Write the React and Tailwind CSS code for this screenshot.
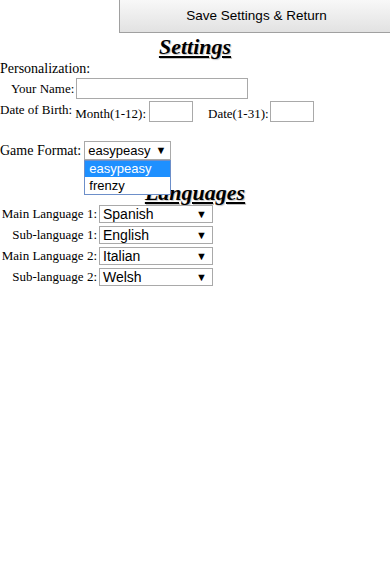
import React from "react";

const LANGS = [
  { label: "Main Language 1:", value: "Spanish" },
  { label: "Sub-language 1:", value: "English" },
  { label: "Main Language 2:", value: "Italian" },
  { label: "Sub-language 2:", value: "Welsh" },
];

const TextBox = ({ className = "" }) => (
  <input
    type="text"
    className={`h-[21px] border border-[#a9a9a9] bg-white outline-none ${className}`}
  />
);

const FakeSelect = ({ value, className = "" }) => (
  <div
    className={`flex items-center justify-between border border-[#a9a9a9] bg-white pl-[3px] pr-[4px] font-['Liberation_Sans',sans-serif] text-[13px] leading-none ${className}`}
  >
    <span>{value}</span>
    <span className="text-[11px]">▼</span>
  </div>
);

export default function App() {
  return (
    <div className="relative h-[563px] w-[390px] overflow-hidden bg-white font-['Liberation_Serif',serif] text-[14px] leading-[16px] text-black">
      <button
        type="button"
        className="ml-[119px] flex h-[33px] w-[275px] items-center justify-center border border-t-0 border-[#a0a0a0] bg-gradient-to-b from-[#f8f8f8] to-[#e2e2e2] font-['Liberation_Sans',sans-serif] text-[13.5px]"
      >
        Save Settings &amp; Return
      </button>

      <h2 className="mt-[1px] text-center text-[22px] font-bold italic leading-[26px] underline [text-shadow:1px_1px_1px_#c4c4c4]">
        Settings
      </h2>

      <div className="mt-[1px]">Personalization:</div>

      <div className="mt-[1px] flex items-center pl-[11px] text-[13px]">
        <span>Your Name:</span>
        <TextBox className="ml-[2px] w-[172px]" />
      </div>

      <div className="mt-[2px] flex items-start text-[13px]">
        <span className="pt-[1px]">Date of Birth:</span>
        <span className="ml-[3px] pt-[5px]">Month(1-12):</span>
        <TextBox className="ml-[3px] h-[20px] w-[44px]" />
        <span className="ml-[15px] pt-[5px]">Date(1-31):</span>
        <TextBox className="ml-[1px] h-[20px] w-[44px]" />
      </div>

      <div className="relative mt-[19px] flex items-center">
        <span>Game Format:</span>
        <div className="relative ml-[3px]">
          <FakeSelect
            value="easypeasy"
            className="h-[19px] w-[87px] border-[#7aa7e6]"
          />
          <div className="absolute left-0 top-[19px] z-10 w-[87px] border border-[#6d8fc9] bg-white font-['Liberation_Sans',sans-serif] text-[13px]">
            <div className="h-[16px] bg-[#1e90ff] pl-[4px] leading-[16px] text-white">
              easypeasy
            </div>
            <div className="h-[17px] pl-[4px] leading-[17px]">frenzy</div>
          </div>
        </div>
      </div>

      <h2 className="mt-[20px] text-center text-[22px] font-bold italic leading-[26px] underline [text-shadow:1px_1px_1px_#c4c4c4]">
        Languages
      </h2>

      <div className="mt-[-1px] flex flex-col gap-[3px] text-[13px]">
        {LANGS.map((row) => (
          <div key={row.label} className="flex items-center">
            <span className="w-[97px] whitespace-nowrap text-right">
              {row.label}
            </span>
            <FakeSelect
              value={row.value}
              className="ml-[2px] h-[18px] w-[114px] pr-[5px] text-[14px]"
            />
          </div>
        ))}
      </div>
    </div>
  );
}
